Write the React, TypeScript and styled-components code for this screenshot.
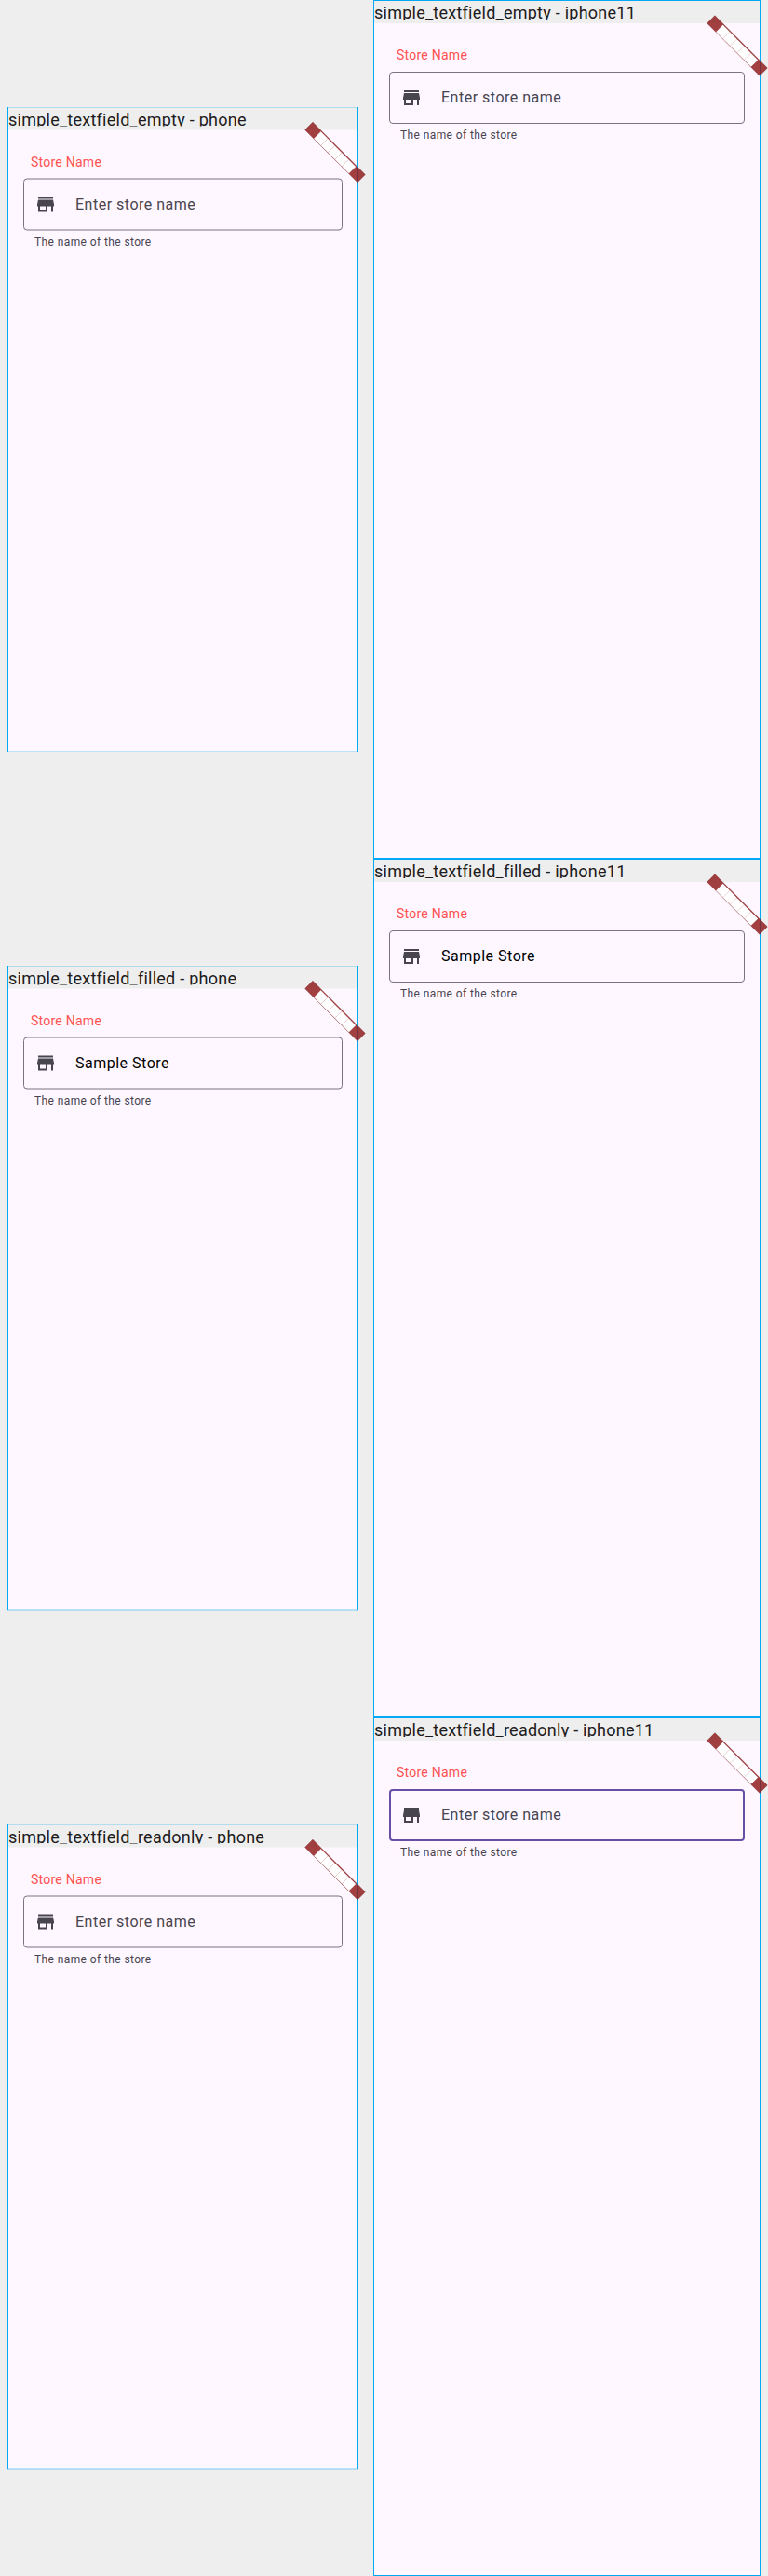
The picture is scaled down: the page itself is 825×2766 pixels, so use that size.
import React from "react";
import styled, { createGlobalStyle, css } from "styled-components";

const GlobalStyle = createGlobalStyle`
  *, *::before, *::after { box-sizing: border-box; }
  body {
    margin: 0;
    background: #eeeeee;
    font-family: Roboto, "Liberation Sans", sans-serif;
    font-weight: 400;
  }
`;

const Sheet = styled.main`
  display: flex;
  flex-direction: column;
  width: 825px;
  background: #eeeeee;
`;

const ScenarioRow = styled.section`
  display: grid;
  grid-template-columns: 377px 416px;
  column-gap: 16px;
  align-items: start;
  height: 922px;
  padding: 0 8px;
`;

type Device = "phone" | "iphone11";

/* The phone is vertically centred in its row, which lands on a half pixel. */
const Frame = styled.article<{ $device: Device }>`
  display: flex;
  flex-direction: column;
  height: 922px;
  border: 1px solid #03a9f4;
  ${({ $device }) =>
    $device === "phone" &&
    css`
      height: 693px;
      margin-top: 114px;
      transform: translateY(0.5px);
      clip-path: inset(0.5px -12px 0 -2px);
    `}
`;

const Header = styled.header`
  height: 24px;
  background: #eeeeee;
`;

const Title = styled.div`
  height: 20px;
  overflow: hidden;
  white-space: nowrap;
  font-size: 18px;
  line-height: 25px;
  letter-spacing: 0.25px;
  color: #1d1b20;
`;

const Screen = styled.div`
  position: relative;
  flex: 1;
  padding: 24px 16px 0;
  background: #fef7ff;
`;

const Label = styled.label`
  display: block;
  padding-left: 8px;
  font-size: 14px;
  line-height: 20px;
  letter-spacing: 0.25px;
  color: #ff5252;
`;

const Field = styled.div<{ $focused: boolean }>`
  display: flex;
  align-items: center;
  gap: 20px;
  height: 56px;
  margin-top: 8px;
  padding-left: ${({ $focused }) => ($focused ? 10 : 11)}px;
  border: ${({ $focused }) => ($focused ? "2px solid #6750a4" : "1px solid #79747e")};
  border-radius: 4px;
`;

const StoreIcon = styled.svg`
  flex: none;
  width: 24px;
  height: 24px;
  fill: #49454f;
`;

const Value = styled.span<{ $filled: boolean }>`
  font-size: 16px;
  line-height: 24px;
  letter-spacing: 0.5px;
  color: ${({ $filled }) => ($filled ? "#000000" : "#49454f")};
`;

const Helper = styled.p`
  margin: 4px 0 0;
  padding-left: 12px;
  font-size: 12px;
  line-height: 16px;
  letter-spacing: 0.4px;
  color: #49454f;
`;

const Ribbon = styled.svg`
  position: absolute;
  top: -10px;
  right: -10px;
  width: 70px;
  height: 70px;
`;

/* Corner debug banner: a 12px band turned 45°, its five glyphs drawn as boxes. */
function DebugBanner() {
  return (
    <Ribbon viewBox="-60 -10 70 70" aria-hidden="true">
      <g transform="rotate(45)">
        <rect x={-40} y={28} width={80} height={12} fill="#000" fillOpacity={0.5} />
        <rect x={-40} y={28} width={80} height={12} fill="#b71c1c" fillOpacity={0.627} />
        {[0, 1, 2, 3, 4].map((i) => (
          <rect key={i} x={-26.6 + i * 10.64} y={29.2} width={10.64} height={10.4} fill="#fff" />
        ))}
      </g>
    </Ribbon>
  );
}

interface Scenario {
  name: string;
  value?: string;
  focusedOn?: Device;
}

function Preview({ scenario, device }: { scenario: Scenario; device: Device }) {
  return (
    <Frame $device={device}>
      <Header>
        <Title>{`${scenario.name} - ${device}`}</Title>
      </Header>
      <Screen>
        <Label>Store Name</Label>
        <Field $focused={scenario.focusedOn === device}>
          <StoreIcon viewBox="0 0 24 24" aria-hidden="true">
            <path d="M20 4H4v2h16V4zm1 10v-2l-1-5H4l-1 5v2h1v6h10v-6h4v6h2v-6h1v0zm-9 4H6v-4h6v4z" />
          </StoreIcon>
          <Value $filled={Boolean(scenario.value)}>{scenario.value ?? "Enter store name"}</Value>
        </Field>
        <Helper>The name of the store</Helper>
        <DebugBanner />
      </Screen>
    </Frame>
  );
}

const scenarios: Scenario[] = [
  { name: "simple_textfield_empty" },
  { name: "simple_textfield_filled", value: "Sample Store" },
  { name: "simple_textfield_readonly", focusedOn: "iphone11" },
];

export default function App() {
  return (
    <Sheet>
      <GlobalStyle />
      {scenarios.map((scenario) => (
        <ScenarioRow key={scenario.name}>
          <Preview scenario={scenario} device="phone" />
          <Preview scenario={scenario} device="iphone11" />
        </ScenarioRow>
      ))}
    </Sheet>
  );
}
